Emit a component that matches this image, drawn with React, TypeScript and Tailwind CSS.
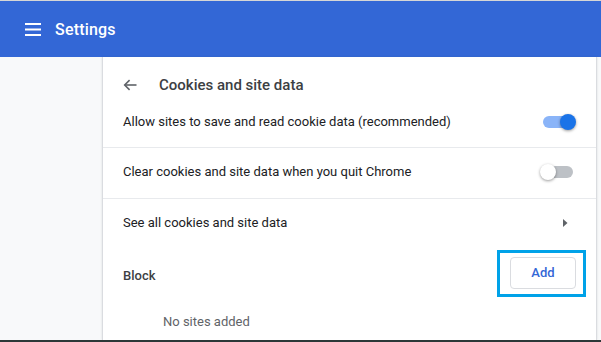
function Toggle({ on }: { on: boolean }) {
  return (
    <div className="relative w-[36px] h-[16px] shrink-0">
      <div className={`absolute left-[3px] right-[3px] top-[2px] h-[12px] rounded-full ${on ? 'bg-[#8ab4f8]' : 'bg-[#bdc1c6]'}`} />
      <div
        className={`absolute top-0 w-[16px] h-[16px] rounded-full shadow-[0_1px_3px_rgba(0,0,0,0.4)] ${on ? 'right-0 bg-[#1a73e8]' : 'left-0 bg-white'}`}
      />
    </div>
  );
}

export default function App() {
  return (
    <div className="w-[601px] h-[342px] overflow-hidden flex flex-col bg-[#f8f9fa] font-['Roboto','Liberation_Sans',sans-serif] text-[13px] text-[#202124]">
      {/* Top strip + header */}
      <div className="h-px bg-[#d6d6d6] shrink-0" />
      <div className="h-[56px] shrink-0 bg-[#3367d6] flex items-center pl-[25px] gap-[14px] text-white">
        <svg width="16" height="13" viewBox="0 0 16 13" fill="white">
          <rect x="0" y="0" width="16" height="2" />
          <rect x="0" y="5.5" width="16" height="2" />
          <rect x="0" y="11" width="16" height="2" />
        </svg>
        <span className="text-[16px] font-medium tracking-[0.2px] leading-none pt-[1px]">Settings</span>
      </div>

      {/* Body */}
      <div className="flex-1 flex min-h-0">
        <div className="w-[102px] shrink-0" />
        <div className="w-[495px] shrink-0 bg-white border-l border-r border-[#dadce0] shadow-[0_0_2px_rgba(60,64,67,0.15)] flex flex-col">
          {/* Title */}
          <div className="h-[56px] flex items-center pl-[20px]">
            <svg width="14" height="12" viewBox="0 0 14 12" fill="none" stroke="#5f6368" strokeWidth="1.6">
              <path d="M13.5 6H1.8" />
              <path d="M6.6 1.1 1.7 6l4.9 4.9" />
            </svg>
            <span className="ml-[22px] text-[15px] font-medium text-[#3c4043]">Cookies and site data</span>
          </div>

          {/* Row 1 */}
          <div className="h-[35px] pb-[16px] flex items-center justify-between pl-[20px] pr-[20px] border-b border-[#e8eaed]">
            <span>Allow sites to save and read cookie data (recommended)</span>
            <Toggle on />
          </div>

          {/* Row 2 */}
          <div className="h-[51px] pb-[3px] flex items-center justify-between pl-[20px] pr-[20px] border-b border-[#e8eaed]">
            <span>Clear cookies and site data when you quit Chrome</span>
            <Toggle on={false} />
          </div>

          {/* Row 3 */}
          <div className="h-[48px] flex items-center justify-between pl-[20px] pr-[28px]">
            <span>See all cookies and site data</span>
            <svg width="5" height="8" viewBox="0 0 5 8" fill="#5f6368">
              <path d="M0 0l4.5 4L0 8z" />
            </svg>
          </div>

          {/* Block */}
          <div className="h-[52px] flex items-center justify-between pl-[20px] pr-[10px]">
            <span className="font-medium text-[#3c4043] pt-[5px]">Block</span>
            <div className="border-[3px] border-[#00a2e8] pt-[4px] pb-[5px] pl-[10px] pr-[7px]">
              <div className="w-[66px] h-[32px] rounded-[4px] border border-[#dadce0] flex items-center justify-center text-[#3367d6] font-medium">
                Add
              </div>
            </div>
          </div>

          {/* Empty */}
          <div className="pl-[60px] pt-[13px] text-[#5f6368]">No sites added</div>
        </div>
        <div className="flex-1" />
      </div>

      {/* Bottom strip */}
      <div className="h-[2px] shrink-0 bg-[#2c3838]" />
    </div>
  );
}
